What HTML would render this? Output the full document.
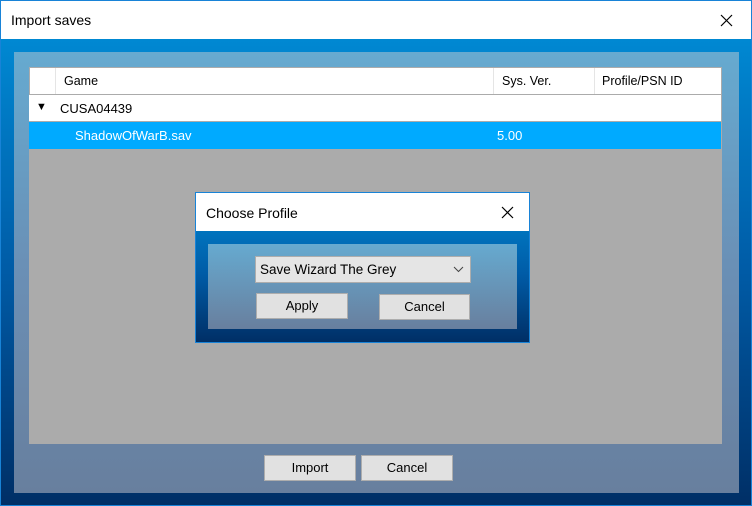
<!DOCTYPE html>
<html><head><style>
*{margin:0;padding:0;box-sizing:border-box}
body{width:752px;height:506px;overflow:hidden;font-family:"Liberation Sans",sans-serif;font-size:13px;position:relative;background:#fff}
.a{position:absolute}
.win{left:0;top:0;width:752px;height:506px;border:1px solid #1883d7}
.tb{left:0;top:0;width:750px;height:38px;background:#fff}
.body{left:0;top:38px;width:750px;height:466px;background:linear-gradient(#0088d2,#005ba6 50%,#002f66)}
.pan{left:13px;top:13px;width:725px;height:441px;background:linear-gradient(#66aad0,#6a8fb5 50%,#687f9e)}
.grid{left:15px;top:15px;width:693px;height:377px;background:#ababab}
.btn{background:#e1e1e1;border:1px solid #adadad;text-align:center;line-height:23px;color:#000;font-size:13px}
</style></head><body>
<div class="a win">
<div class="a tb"><span class="a" style="left:10px;top:11px;font-size:14px">Import saves</span>
<svg class="a" style="left:719px;top:13px" width="13" height="13"><path d="M1 1L12 12M12 1L1 12" stroke="#000" stroke-width="1.2"/></svg></div>
<div class="a body">
<div class="a pan">
<div class="a grid">
 <div class="a" style="left:1px;top:1px;width:691px;height:26px;background:#fff"></div>
 <div class="a" style="left:26px;top:1px;width:1px;height:26px;background:#e5e5e5"></div>
 <div class="a" style="left:464px;top:1px;width:1px;height:26px;background:#e5e5e5"></div>
 <div class="a" style="left:565px;top:1px;width:1px;height:26px;background:#e5e5e5"></div>
 <span class="a" style="left:35px;top:7px;font-size:12.5px">Game</span>
 <span class="a" style="left:473px;top:7px;font-size:12.5px">Sys. Ver.</span>
 <span class="a" style="left:573px;top:7px;font-size:12.5px">Profile/PSN ID</span>
 <div class="a" style="left:0;top:28px;width:692px;height:26px;background:#fff"></div>
 <span class="a" style="left:7px;top:34px;font-size:11px">▼</span>
 <span class="a" style="left:31px;top:34px;font-size:13px">CUSA04439</span>
 <div class="a" style="left:0;top:55px;width:692px;height:27px;background:#00aaff"></div>
 <span class="a" style="left:46px;top:61px;color:#fff;font-size:13px">ShadowOfWarB.sav</span>
 <span class="a" style="left:468px;top:61px;color:#fff;font-size:13px">5.00</span>
</div>
<div class="a btn" style="left:250px;top:403px;width:92px;height:26px">Import</div>
<div class="a btn" style="left:347px;top:403px;width:92px;height:26px">Cancel</div>
</div></div></div>

<div class="a" style="left:195px;top:192px;width:335px;height:151px;border:1px solid #1883d7;background:linear-gradient(#0088d2,#005ba6 55%,#002f66)">
 <div class="a" style="left:0;top:0;width:333px;height:38px;background:#fff"></div>
 <span class="a" style="left:10px;top:12px;font-size:14px">Choose Profile</span>
 <svg class="a" style="left:305px;top:13px" width="13" height="13"><path d="M1 1L12 12M12 1L1 12" stroke="#000" stroke-width="1.2"/></svg>
 <div class="a" style="left:12px;top:51px;width:309px;height:85px;background:linear-gradient(#66aad0,#687f9e)">
  <div class="a" style="left:47px;top:12px;width:216px;height:27px;background:#e5e5e5;border:1px solid #adadad"><span class="a" style="left:4px;top:5px;font-size:13.5px">Save Wizard The Grey</span>
  <svg class="a" style="left:197px;top:9px" width="11" height="7"><path d="M1 1L5.5 5.5L10 1" stroke="#444" fill="none"/></svg></div>
  <div class="a btn" style="left:48px;top:49px;width:92px;height:26px">Apply</div>
  <div class="a btn" style="left:171px;top:50px;width:91px;height:26px">Cancel</div>
 </div>
</div>
</body></html>
